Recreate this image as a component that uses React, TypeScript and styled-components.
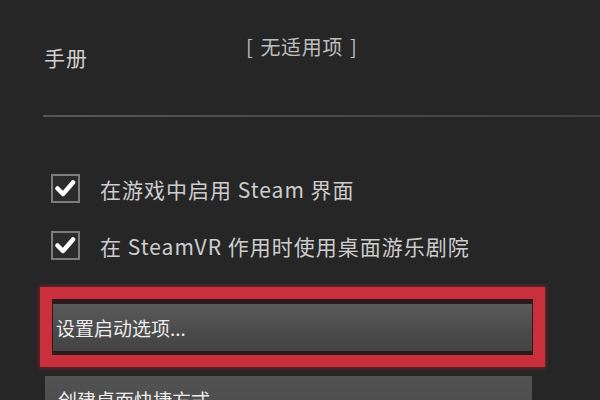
import * as React from 'react';
import styled, { createGlobalStyle } from 'styled-components';

const GlobalStyle = createGlobalStyle`
  html, body {
    margin: 0;
    padding: 0;
    background: #262626;
  }
  body {
    font-family: "Noto Sans CJK SC", "Noto Sans", sans-serif;
  }
`;

const Page = styled.section`
  width: 600px;
  height: 400px;
  overflow: hidden;
  box-sizing: border-box;
  padding-left: 40px;
  background: #262626;
  display: flex;
  flex-direction: column;

  & > * {
    flex-shrink: 0;
  }
`;

const InfoRow = styled.div`
  display: flex;
  align-items: flex-start;
  margin-top: 33px;
`;

const InfoLabel = styled.div`
  width: 205px;
  padding-top: 10px;
  padding-left: 4px;
  font-size: 21px;
  line-height: 28px;
  color: #cfcfcf;
  letter-spacing: 1px;
`;

const InfoValue = styled.div`
  font-size: 20px;
  line-height: 28px;
  color: #bdbdbd;
  word-spacing: 2px;
  letter-spacing: 0.6px;
  margin-left: -3px;
`;

const Divider = styled.div`
  margin-top: 44px;
  height: 2px;
  margin-left: 3px;
  background: linear-gradient(to right, #575757, #484848 60%, #424242);
`;

const CheckList = styled.div`
  display: flex;
  flex-direction: column;
  gap: 28px;
  margin-top: 57px;
  padding-left: 11px;
`;

const CheckRow = styled.label`
  display: flex;
  align-items: center;
  gap: 20px;
  height: 29px;
`;

const Box = styled.span`
  width: 29px;
  height: 29px;
  box-sizing: border-box;
  border: 2px solid #7d7d7d;
  background: #2b2b2b;
  display: flex;
  align-items: center;
  justify-content: center;
`;

const CheckText = styled.span`
  font-size: 21px;
  color: #cdcdcd;
  letter-spacing: 1px;
  white-space: nowrap;
`;

const Highlight = styled.div`
  margin-top: 27px;
  width: 505px;
  box-sizing: border-box;
  border: 12px solid #c9303c;
  padding: 5px 1px 4px;
  background: #2c1b1d;
  box-shadow: 0 0 4px 1px rgba(190, 30, 45, 0.55);
`;

const ActionButton = styled.div<{ $active?: boolean }>`
  height: ${p => (p.$active ? 47 : 50)}px;
  box-sizing: border-box;
  display: flex;
  align-items: ${p => (p.$active ? 'center' : 'flex-start')};
  padding-left: ${p => (p.$active ? 3 : 13)}px;
  padding-top: ${p => (p.$active ? 0 : 10)}px;
  font-size: 19px;
  color: #ececec;
  background: ${p =>
    p.$active
      ? 'linear-gradient(to bottom, #5a5a5a, #4a4a4a 60%, #444)'
      : 'linear-gradient(to bottom, #525252, #4a4a4a)'};
`;

const NextButton = styled(ActionButton)`
  margin-top: 9px;
  margin-left: 5px;
  width: 487px;
`;

const Check = () => (
  <svg width="21" height="19" viewBox="0 0 21 19">
    <polyline
      points="2.5,9.5 8,15 18,3.5"
      fill="none"
      stroke="#ffffff"
      strokeWidth="4.5"
      strokeLinecap="round"
      strokeLinejoin="round"
    />
  </svg>
);

const options = ['在游戏中启用 Steam 界面', '在 SteamVR 作用时使用桌面游乐剧院'];

export default function App() {
  return (
    <Page>
      <GlobalStyle />
      <InfoRow>
        <InfoLabel>手册</InfoLabel>
        <InfoValue>[ 无适用项 ]</InfoValue>
      </InfoRow>
      <Divider />
      <CheckList>
        {options.map(text => (
          <CheckRow key={text}>
            <Box>
              <Check />
            </Box>
            <CheckText>{text}</CheckText>
          </CheckRow>
        ))}
      </CheckList>
      <Highlight>
        <ActionButton $active>设置启动选项...</ActionButton>
      </Highlight>
      <NextButton>创建桌面快捷方式</NextButton>
    </Page>
  );
}
